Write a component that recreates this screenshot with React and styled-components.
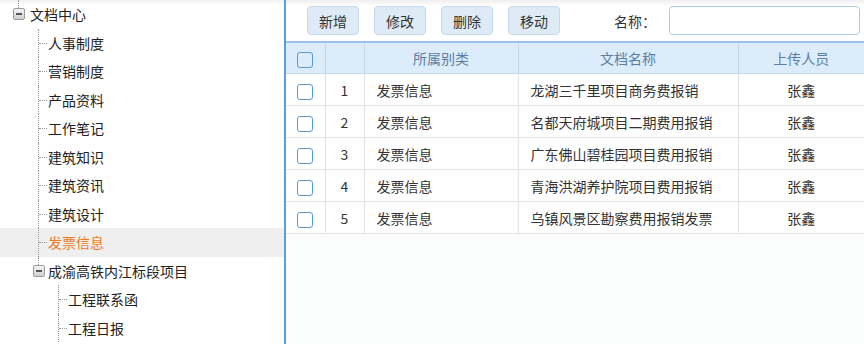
import styled, { createGlobalStyle } from "styled-components";

const GlobalStyle = createGlobalStyle`
  html, body {
    margin: 0;
    padding: 0;
    height: 100%;
  }
  body {
    font-family: "Noto Sans CJK SC", "Liberation Sans", sans-serif;
    font-size: 14px;
    color: #333;
  }
  #root {
    height: 100%;
  }
`

const Page = styled.div`
  display: flex;
  width: 864px;
  height: 344px;
  overflow: hidden;
`

const Side = styled.div`
  width: 284px;
  flex: none;
  border-right: 2px solid #5a9fd9;
  background: linear-gradient(#f1f1f1, #fff 5px);
  overflow: hidden;
`

const Row = styled.div`
  position: relative;
  display: flex;
  align-items: center;
  height: 28.5px;
  padding-left: ${p => p.$indent}px;
  background: ${p => (p.$active ? "#efefef" : "transparent")};
  color: ${p => (p.$active ? "#f07a1c" : "#222")};
  white-space: nowrap;

  &::before {
    content: ${p => (p.$line ? "''" : "none")};
    position: absolute;
    left: ${p => p.$line}px;
    top: 0;
    height: ${p => (p.$last ? "50%" : "100%")};
    border-left: 1px dotted #9a9a9a;
  }

  &::after {
    content: ${p => (p.$line && !p.$folder ? "''" : "none")};
    position: absolute;
    left: ${p => p.$line + 1}px;
    top: 50%;
    width: 8px;
    border-top: 1px dotted #9a9a9a;
  }
`

const Toggle = styled.span`
  position: relative;
  box-sizing: border-box;
  width: 12px;
  height: 12px;
  margin-right: ${p => p.$gap}px;
  border: 1px solid #9c9c9c;
  border-radius: 2px;
  background: linear-gradient(#f4f4f4, #cfcfcf);
  z-index: 1;

  &::before {
    content: '';
    position: absolute;
    left: 2px;
    right: 2px;
    top: 4px;
    height: 2px;
    background: #555;
  }
`

const RootStem = styled.span`
  position: absolute;
  left: 18px;
  top: 0;
  height: 8px;
  border-left: 1px dotted #9a9a9a;
`

const Main = styled.div`
  flex: 1;
  display: flex;
  flex-direction: column;
  background: #fbfcfc;
`

const Toolbar = styled.div`
  display: flex;
  align-items: center;
  gap: 15px;
  height: 41px;
  padding: 0 4px 0 21px;
  background: linear-gradient(#efefef, #fff 6px);
`

const Button = styled.button`
  width: 52px;
  height: 29px;
  padding: 0;
  border: 1px solid #c5d9ee;
  border-radius: 4px;
  background: #deebf7;
  color: #333;
  font: inherit;
  font-size: 14px;
`

const Label = styled.span`
  margin-left: auto;
  margin-right: -2px;
  color: #333;
`

const Input = styled.input`
  box-sizing: border-box;
  width: 191px;
  height: 29px;
  border: 1px solid #a9c9e8;
  border-radius: 4px;
  background: #fff;
`

const Table = styled.table`
  width: 578px;
  border-collapse: collapse;
  table-layout: fixed;
  border-top: 2px solid #9cc3e6;
  background: #fff;
`

const Th = styled.th`
  height: 30px;
  padding: 0;
  font-weight: normal;
  color: #5a7fa6;
  background: #ddecfa;
  border-left: 1px solid #c3d8ec;
  border-bottom: 1px solid #c3d8ec;
  text-align: center;
  &:first-child { border-left: none; }
`

const Td = styled.td`
  height: 31px;
  padding: 0 ${p => (p.$align === "left" ? "12px" : "0")};
  border-left: 1px solid #e3e3e3;
  border-bottom: 1px solid #e3e3e3;
  text-align: ${p => p.$align || "center"};
  color: #333;
  white-space: nowrap;
  &:first-child { border-left: none; }
`

const Check = styled.span`
  display: inline-block;
  box-sizing: border-box;
  width: 16px;
  height: 16px;
  vertical-align: middle;
  border: 1px solid #5a9ad6;
  border-radius: 3px;
  background: ${p => (p.$head ? "transparent" : "#fff")};
`

const items = ["人事制度", "营销制度", "产品资料", "工作笔记", "建筑知识", "建筑资讯", "建筑设计", "发票信息"];

const rows = [
  "龙湖三千里项目商务费报销",
  "名都天府城项目二期费用报销",
  "广东佛山碧桂园项目费用报销",
  "青海洪湖养护院项目费用报销",
  "乌镇风景区勘察费用报销发票",
];

export default function App() {
  return (
    <Page>
      <GlobalStyle />
      <Side>
        <Row $indent={13}>
          <RootStem />
          <Toggle $gap={5} />
          文档中心
        </Row>
        {items.map(name => (
          <Row key={name} $indent={48} $line={38} $active={name === "发票信息"}>
            {name}
          </Row>
        ))}
        <Row $indent={33} $line={38} $last $folder>
          <Toggle $gap={3} />
          成渝高铁内江标段项目
        </Row>
        <Row $indent={68} $line={58}>工程联系函</Row>
        <Row $indent={68} $line={58}>工程日报</Row>
      </Side>
      <Main>
        <Toolbar>
          <Button>新增</Button>
          <Button>修改</Button>
          <Button>删除</Button>
          <Button>移动</Button>
          <Label>名称：</Label>
          <Input />
        </Toolbar>
        <Table>
          <colgroup>
            <col style={{ width: 39 }} />
            <col style={{ width: 39 }} />
            <col style={{ width: 154 }} />
            <col style={{ width: 220 }} />
            <col style={{ width: 126 }} />
          </colgroup>
          <thead>
            <tr>
              <Th><Check $head /></Th>
              <Th />
              <Th>所属别类</Th>
              <Th>文档名称</Th>
              <Th>上传人员</Th>
            </tr>
          </thead>
          <tbody>
            {rows.map((name, i) => (
              <tr key={name}>
                <Td><Check /></Td>
                <Td>{i + 1}</Td>
                <Td $align="left">发票信息</Td>
                <Td $align="left">{name}</Td>
                <Td>张鑫</Td>
              </tr>
            ))}
          </tbody>
        </Table>
      </Main>
    </Page>
  );
}
